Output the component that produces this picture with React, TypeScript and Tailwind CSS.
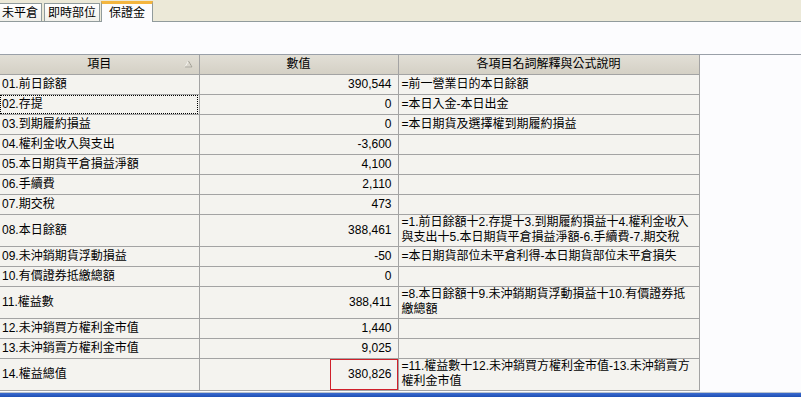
import React from 'react';

type Row = { name: string; value: string; desc?: string; tall?: boolean };

const rows: Row[] = [
  { name: '01.前日餘額', value: '390,544', desc: '=前一營業日的本日餘額' },
  { name: '02.存提', value: '0', desc: '=本日入金-本日出金' },
  { name: '03.到期履約損益', value: '0', desc: '=本日期貨及選擇權到期履約損益' },
  { name: '04.權利金收入與支出', value: '-3,600' },
  { name: '05.本日期貨平倉損益淨額', value: '4,100' },
  { name: '06.手續費', value: '2,110' },
  { name: '07.期交稅', value: '473' },
  {
    name: '08.本日餘額',
    value: '388,461',
    desc: '=1.前日餘額十2.存提十3.到期履約損益十4.權利金收入與支出十5.本日期貨平倉損益淨額-6.手續費-7.期交稅',
    tall: true,
  },
  { name: '09.未沖銷期貨浮動損益', value: '-50', desc: '=本日期貨部位未平倉利得-本日期貨部位未平倉損失' },
  { name: '10.有價證券抵繳總額', value: '0' },
  {
    name: '11.權益數',
    value: '388,411',
    desc: '=8.本日餘額十9.未沖銷期貨浮動損益十10.有價證券抵繳總額',
    tall: true,
  },
  { name: '12.未沖銷買方權利金市值', value: '1,440' },
  { name: '13.未沖銷賣方權利金市值', value: '9,025' },
  {
    name: '14.權益總值',
    value: '380,826',
    desc: '=11.權益數十12.未沖銷買方權利金市值-13.未沖銷賣方權利金市值',
    tall: true,
  },
];

function Tab({ label, active, className }: { label: string; active?: boolean; className?: string }) {
  if (active) {
    return (
      <div
        className={`relative h-[21px] -mb-px px-[7px] bg-[#fcfcfe] border border-b-0 border-[#919b9c] border-t-[3px] border-t-[#f3b53f] flex items-center text-[12px] text-black ${className ?? ''}`}
      >
        {label}
      </div>
    );
  }
  return (
    <div
      className={`h-[18px] px-[3px] bg-gradient-to-b from-[#ffffff] to-[#f1f0ea] border border-b-0 border-[#919b9c] flex items-center text-[12px] text-black ${className ?? ''}`}
    >
      {label}
    </div>
  );
}

export default function App() {
  return (
    <div
      className="w-[801px] h-[397px] overflow-hidden bg-[#fcfcfe] flex flex-col"
      style={{ fontFamily: '"Liberation Sans", "Noto Sans CJK TC", sans-serif' }}
    >
      {/* tabs */}
      <div className="h-[22px] shrink-0 bg-[#ece9d8] flex items-end border-b border-[#919b9c]">
        <Tab label="未平倉" className="-ml-[2px] mr-[2px]" />
        <Tab label="即時部位" className="mr-[1px]" />
        <Tab label="保證金" active />
      </div>

      <div className="h-[32px] shrink-0" />

      {/* grid */}
      <div className="flex-1 border-t border-[#9aa0a8] flex flex-col overflow-hidden">
        <table className="border-collapse table-fixed w-[699px] text-[12px] text-black leading-[15px]">
          <colgroup>
            <col className="w-[199px]" />
            <col className="w-[199px]" />
            <col className="w-[301px]" />
          </colgroup>
          <thead>
            <tr className="h-[19px] bg-gradient-to-b from-[#e2dfd6] to-[#d4d0c5]">
              <th className="relative font-normal text-center border-r border-b border-[#a3a3a3]">
                項目
                <svg className="absolute right-[6px] top-[5px]" width="9" height="8" viewBox="0 0 9 8">
                  <path d="M4.5 1 L8 7 L1 7 Z" fill="none" stroke="#f4f3ee" strokeWidth="1" />
                  <path d="M8 7 L1 7" stroke="#a09d92" strokeWidth="1" />
                  <path d="M4.5 1 L8 7" stroke="#a09d92" strokeWidth="1" />
                </svg>
              </th>
              <th className="font-normal text-center border-r border-b border-[#a3a3a3]">數值</th>
              <th className="font-normal text-center border-r border-b border-[#a3a3a3]">各項目名詞解釋與公式說明</th>
            </tr>
          </thead>
          <tbody>
            {rows.map((r, i) => (
              <tr key={i} className={`${r.tall ? 'h-[32px]' : 'h-[20px]'} bg-[#f4f3ef]`}>
                <td className="relative border border-l-0 border-[#a3a3a3] pl-[2px] whitespace-nowrap">
                  {i === 1 && (
                    <div className="absolute inset-0 right-[1px] border border-dotted border-black" />
                  )}
                  {r.name}
                </td>
                <td className="relative border border-[#a3a3a3] text-right pr-[6px]">
                  {i === rows.length - 1 && (
                    <div className="absolute top-0 bottom-0 left-[130px] right-0 border border-[#d0202a]" />
                  )}
                  <span className="relative">{r.value}</span>
                </td>
                <td className="border border-[#a3a3a3] pl-[3px] pr-[8px] leading-[15px] align-middle">
                  {r.desc ?? ''}
                </td>
              </tr>
            ))}
          </tbody>
        </table>
        <div className="flex-1" />
        <div className="h-px shrink-0 bg-[#b9c3cf]" />
        <div className="h-[4px] shrink-0 bg-gradient-to-b from-[#3b6bd0] to-[#1f4fb4]" />
      </div>
    </div>
  );
}
